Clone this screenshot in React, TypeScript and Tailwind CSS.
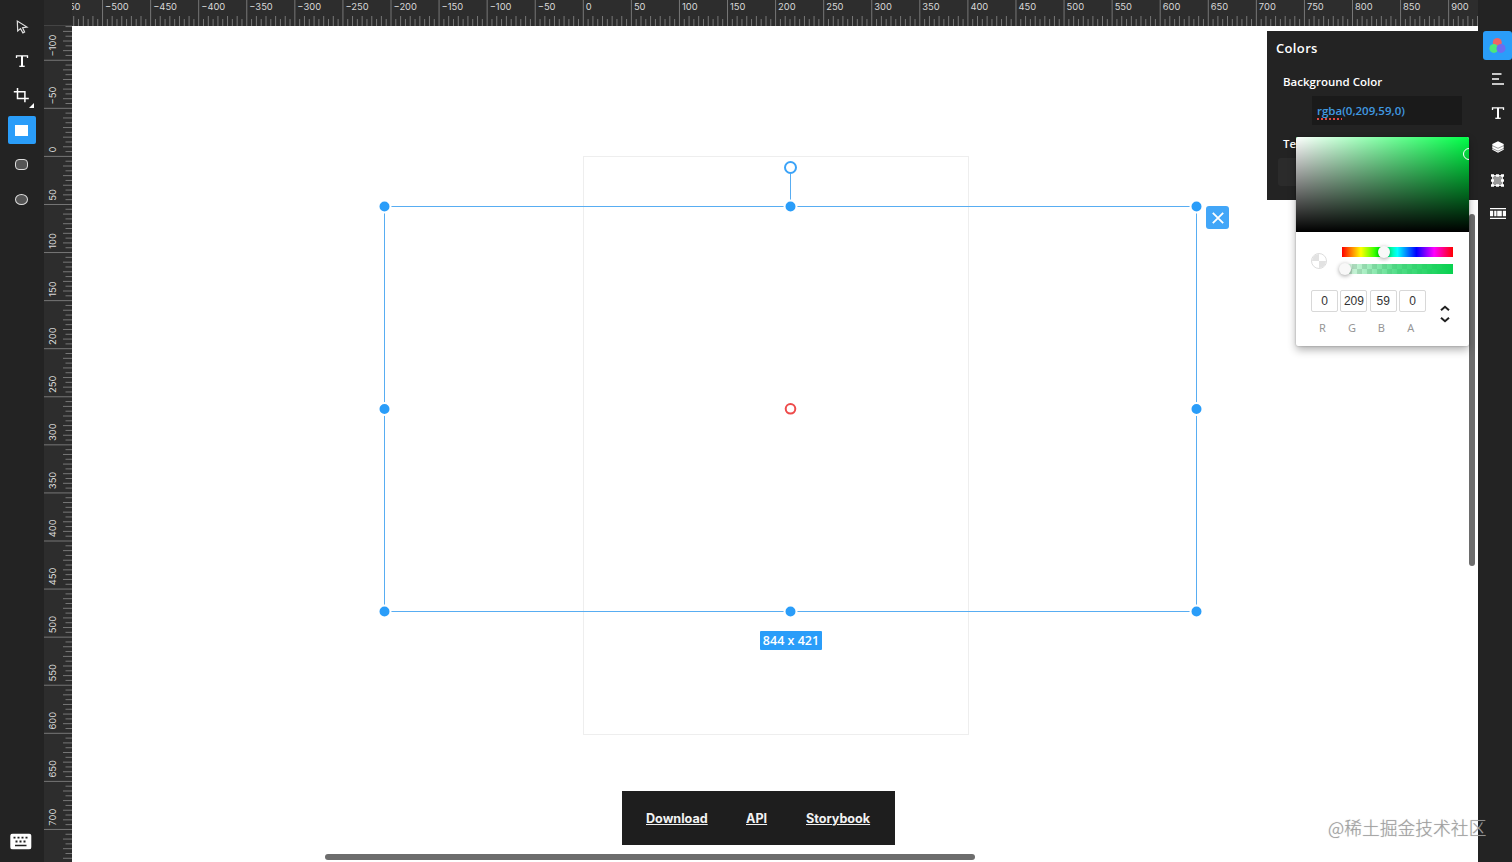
import type { ReactNode } from "react";

const UNIT = 48.075;

const HANDLES = [
  [384.5, 206.5],
  [790.5, 206.5],
  [1196.5, 206.5],
  [384.5, 409],
  [1196.5, 409],
  [384.5, 611.5],
  [790.5, 611.5],
  [1196.5, 611.5],
];

function range(from: number, to: number) {
  return Array.from({ length: to - from + 1 }, (_, i) => from + i);
}

function label(n: number) {
  return n < 0 ? `−${-n}` : `${n}`;
}

function ticks(from: number, to: number, origin: number) {
  return range(from * 10, to * 10).map((i) => ({
    pos: origin + (i * UNIT) / 10,
    kind: i % 10 === 0 ? "main" : i % 2 === 0 ? "long" : "short",
    text: i < to * 10 ? label(i * 5) : "",
  }));
}

function HorizontalRuler() {
  return (
    <svg width="1406" height="26" className="block shrink-0 bg-[#2d2d2d]">
      {ticks(-11, 19, 511.3).map((t) => (
        <g key={t.pos}>
          <line
            x1={t.pos}
            x2={t.pos}
            y1={t.kind === "main" ? 0 : t.kind === "long" ? 16 : 19}
            y2="26"
            stroke="#777"
          />
          {t.kind === "main" && t.text && (
            <text x={t.pos + 2.5} y="9.7" fontSize="9.4" fill="#d8d8d8" fontFamily="Inter, Arial, sans-serif">
              {t.text}
            </text>
          )}
        </g>
      ))}
    </svg>
  );
}

function VerticalRuler() {
  return (
    <svg width="28" height="836" className="block shrink-0 bg-[#2d2d2d]">
      {ticks(-3, 15, 130.4).map((t) => (
        <g key={t.pos}>
          <line
            y1={t.pos}
            y2={t.pos}
            x1={t.kind === "main" ? 0 : t.kind === "long" ? 19 : 21.5}
            x2="28"
            stroke="#777"
          />
          {t.kind === "main" && t.pos > 0 && t.text && (
            <text
              transform={`translate(12.3 ${t.pos - 3.8}) rotate(-90)`}
              fontSize="9.4"
              fill="#d8d8d8"
              fontFamily="Inter, Arial, sans-serif"
            >
              {t.text}
            </text>
          )}
        </g>
      ))}
    </svg>
  );
}

function TextIcon() {
  return (
    <svg width="14" height="14" viewBox="0 0 14 14" fill="none" stroke="#fff">
      <path d="M1.5 4V1.9h11V4" strokeWidth="1.3" />
      <path d="M7 2v10" strokeWidth="2" />
      <path d="M4.3 12.3h5.4" strokeWidth="1.3" />
    </svg>
  );
}

function Tool({ active, children }: { active?: boolean; children: ReactNode }) {
  return (
    <button
      className={
        active
          ? "relative flex h-7 w-7 items-center justify-center rounded-xs bg-[#2a9df9]"
          : "relative flex h-7 w-7 items-center justify-center"
      }
    >
      {children}
    </button>
  );
}

function Toolbar() {
  return (
    <aside className="flex w-11 shrink-0 flex-col items-center justify-between bg-[#232323] pt-[12.5px] pr-px pb-3">
      <div className="flex flex-col gap-[6.6px]">
        <Tool>
          <svg width="14" height="16" viewBox="0 0 14 16" fill="none" stroke="#ddd" strokeWidth="1.2">
            <path d="M2.3 2 2.7 12 5.5 9.6 7.9 13.9 9.6 13 7.6 8.7 12 8.1Z" />
          </svg>
        </Tool>
        <Tool>
          <TextIcon />
        </Tool>
        <Tool>
          <svg width="16" height="16" viewBox="0 0 16 16" fill="none" stroke="#fff" strokeWidth="1.5" className="-translate-x-px -translate-y-px">
            <path d="M0.8 4.7H11.9V15.2M4.5 1V11.4H15.8" />
          </svg>
          <svg width="5" height="5" className="absolute right-[2px] bottom-[2px]">
            <path d="M5 0V5H0Z" fill="#fff" />
          </svg>
        </Tool>
        <Tool active>
          <span className="h-[11px] w-[13px] bg-white" />
        </Tool>
        <Tool>
          <span className="h-[11px] w-[13px] rounded-[4px] border border-[#ddd] bg-[#555]" />
        </Tool>
        <Tool>
          <span className="mt-px h-[11px] w-[13px] rounded-[50%] border border-[#ddd] bg-[#555]" />
        </Tool>
      </div>
      <svg width="22" height="16" viewBox="0 0 22 16" className="-translate-x-px -translate-y-[0.5px]">
        <rect x="0.3" width="21" height="16" rx="2.5" fill="#fff" />
        <path d="M3.5 4.2h15M5.5 8h11" stroke="#222" strokeWidth="1.8" strokeDasharray="2 2" />
        <path d="M5 12h11.5" stroke="#222" strokeWidth="1.7" />
      </svg>
    </aside>
  );
}

function MenuItem({ children }: { children: ReactNode }) {
  return <button className="flex h-[29px] w-[29px] items-center justify-center">{children}</button>;
}

function RightMenu() {
  return (
    <aside className="flex w-[34px] shrink-0 flex-col items-end gap-[4.7px] bg-[#232323] pt-[31px]">
      <button className="flex h-[29px] w-[29px] items-center justify-center rounded-[3px] bg-[#2a9df9]">
        <svg width="17" height="17" viewBox="0 0 17 17">
          <circle cx="8.3" cy="5.4" r="4.5" fill="#ef6464" />
          <circle cx="4.9" cy="11.4" r="4.5" fill="#4de67c" />
          <circle cx="12" cy="11.4" r="4.5" fill="#6d6df0" />
        </svg>
      </button>
      <MenuItem>
        <svg width="12" height="12" stroke="#fff" strokeWidth="1.6">
          <path d="M0 1h9.5M0 6h7M0 11h12" />
        </svg>
      </MenuItem>
      <MenuItem>
        <TextIcon />
      </MenuItem>
      <MenuItem>
        <svg width="12" height="13" viewBox="0 0 12 13" className="translate-y-[0.5px]">
          <path d="M0.3 3.6 6 0.7 11.7 3.6V9.2L6 12.2 0.3 9.2Z" fill="#fff" />
          <path d="M0 5 6 7.8 12 5M0 7.8 6 10.6 12 7.8" fill="none" stroke="#555" strokeWidth="0.6" />
        </svg>
      </MenuItem>
      <MenuItem>
        <svg width="13" height="13" viewBox="0 0 13 13">
          <rect x="1.5" y="1.5" width="10" height="10" fill="#999" stroke="#ddd" />
          <path d="M0 1.5h3M5 1.5h3M10 1.5h3M0 6.5h3M10 6.5h3M0 11.5h3M5 11.5h3M10 11.5h3" stroke="#fff" strokeWidth="2.4" />
        </svg>
      </MenuItem>
      <MenuItem>
        <svg width="16" height="11" viewBox="0 0 16 11">
          <path d="M0 0.7h16M0 10.3h16" stroke="#fff" strokeWidth="1.2" />
          <path d="M0 2.8h3.2v5.4H0ZM4.2 2.8h2.3v5.4H4.2ZM7.2 2.8h4.6v5.4H7.2ZM12.8 2.8H16v5.4H12.8Z" fill="#fff" />
        </svg>
      </MenuItem>
    </aside>
  );
}

function ColorPicker() {
  return (
    <div className="absolute top-[111px] left-[1224px] h-[209px] w-[173px] overflow-hidden rounded-xs bg-white shadow-[0_0_2px_rgba(0,0,0,0.3),0_4px_8px_rgba(0,0,0,0.3)]">
      <div className="relative h-[95px] bg-[#00ff48]">
        <div className="absolute inset-0 bg-[linear-gradient(to_right,#fff,rgba(255,255,255,0))]" />
        <div className="absolute inset-0 bg-[linear-gradient(to_top,#000,rgba(0,0,0,0))]" />
        <span className="absolute top-[11px] left-[167px] h-3 w-3 rounded-full border-[1.5px] border-white" />
      </div>
      <div className="flex items-center pt-[15px] pl-[15px]">
        <svg width="16" height="16" viewBox="0 0 16 16">
          <circle cx="8" cy="8" r="7.5" fill="#fff" stroke="#ddd" />
          <path d="M8 8V1A7 7 0 0 0 1 8ZM8 8V15A7 7 0 0 0 15 8Z" fill="#e2e2e2" />
        </svg>
        <div className="ml-[15px] flex w-[111px] flex-col gap-[7px]">
          <div className="relative h-[10px] bg-[linear-gradient(to_right,#f00_0%,#ff0_17%,#0f0_33%,#0ff_50%,#00f_67%,#f0f_83%,#f00_100%)]">
            <span className="absolute -top-px left-[36px] h-3 w-3 rounded-full bg-[#f8f8f8] shadow-[0_1px_4px_rgba(0,0,0,0.37)]" />
          </div>
          <div className="relative h-[10px] bg-[conic-gradient(#fff_25%,#ddd_0_50%,#fff_0_75%,#ddd_0)] bg-size-[10px_10px]">
            <div className="absolute inset-0 bg-linear-to-r from-[#00d13b]/10 via-[#16d25f]/75 via-50% to-[#08d14f]" />
            <span className="absolute -top-px -left-[3px] h-3 w-3 rounded-full bg-[#f8f8f8] shadow-[0_1px_4px_rgba(0,0,0,0.37)]" />
          </div>
        </div>
      </div>
      <div className="flex pt-[15.5px] pl-[15px]">
        <div className="flex gap-[2.4px]">
          {[
            ["R", "0"],
            ["G", "209"],
            ["B", "59"],
            ["A", "0"],
          ].map(([name, value]) => (
            <div key={name} className="w-[27px] text-center">
              <div className="h-[22px] rounded-xs border border-[#d8d8d8] font-['Liberation_Sans',Arial,sans-serif] text-[12px] leading-[21px] text-[#333]">
                {value}
              </div>
              <div className="mt-[9px] -ml-1 font-['Noto_Sans',sans-serif] text-[11px] leading-[13px] text-[#969696]">{name}</div>
            </div>
          ))}
        </div>
        <svg width="10" height="18" viewBox="0 0 10 18" fill="none" stroke="#222" strokeWidth="2" className="mt-[15px] ml-[14px]">
          <path d="M1 5.3 5 1.8 9 5.3M1 12.7 5 16.2 9 12.7" />
        </svg>
      </div>
    </div>
  );
}

function ColorsPanel() {
  return (
    <section className="absolute top-[5px] right-0 h-[169px] w-[211px] bg-[#232323] font-['Open_Sans',sans-serif] font-semibold text-white">
      <h2 className="pt-[7px] pl-[9px] text-[13px] leading-5 tracking-[0.35px]">Colors</h2>
      <div className="pt-4 pl-4">
        <h3 className="text-[11.5px] leading-4">Background Color</h3>
        <div className="mt-[6px] ml-[29px] flex h-[29px] w-[150px] items-center bg-[#1a1a1a] pt-px pl-[5px] text-[11.5px] font-semibold text-[#4099e0]">
          <span className="underline decoration-[#e04545] decoration-dotted decoration-2 underline-offset-[3px]">rgba</span>
          (0,209,59,0)
        </div>
        <h3 className="mt-[11px] text-[11.5px] leading-4">Text Color</h3>
        <div className="mt-[6px] -ml-[5px] h-7 w-7 rounded-[3px] bg-[#2b2b2b]" />
      </div>
    </section>
  );
}

/* Canvas children are placed in page coordinates, so shift by the rulers' size. */
function Selection() {
  return (
    <div className="absolute -top-[26px] -left-[72px]">
      <div className="absolute top-[206px] left-[384px] h-[406px] w-[813px] border border-[#58adf2]" />
      <div className="absolute top-[174px] left-[790px] h-8 w-px bg-[#58adf2]" />
      <div className="absolute top-[161px] left-[784px] h-[13px] w-[13px] rounded-full border-2 border-[#3ba3f8] bg-white" />
      <svg width="1512" height="862" className="absolute top-0 left-0" fill="#2a9df9" stroke="#fff" strokeWidth="2">
        {HANDLES.map(([x, y]) => (
          <circle key={`${x}-${y}`} cx={x} cy={y} r="6" />
        ))}
        <circle cx="790.5" cy="408.8" r="4.8" fill="#fff" stroke="#ee4b4b" />
      </svg>
      <div className="absolute top-[631px] left-[760px] flex h-[19px] w-[62px] items-center justify-center rounded-[1px] bg-[#2a9df9] pt-[2px] font-['Open_Sans',sans-serif] text-[12.5px] font-semibold whitespace-nowrap text-white">
        844 x 421
      </div>
      <button className="absolute top-[206px] left-[1206px] flex h-[23px] w-[23px] items-center justify-center rounded-[3px] bg-[#42a6f8]">
        <svg width="12" height="12" stroke="#fff" strokeWidth="1.8">
          <path d="M0.8 0.8 11.2 11.2M11.2 0.8 0.8 11.2" />
        </svg>
      </button>
    </div>
  );
}

function Links() {
  return (
    <nav className="absolute top-[765px] left-[550px] flex h-[54px] w-[273px] items-center bg-[#1e1e1e] pt-[2px] pl-6 font-[Inter,sans-serif] text-[12.6px] font-bold text-[#f2f2f2]">
      <a href="#download" className="w-[100px] underline">
        Download
      </a>
      <a href="#api" className="w-[60px] underline">
        API
      </a>
      <a href="#storybook" className="underline">
        Storybook
      </a>
    </nav>
  );
}

export default function App() {
  return (
    <div className="relative flex h-[862px] w-[1512px] overflow-hidden bg-white">
      <Toolbar />
      <div className="flex flex-1 flex-col">
        <div className="flex">
          <div className="h-[26px] w-7 shrink-0 border-b border-[#444] bg-[#292929]" />
          <HorizontalRuler />
        </div>
        <div className="flex">
          <VerticalRuler />
          <main className="relative h-[836px] w-[1406px]">
            <div className="absolute top-[130px] left-[511px] h-[579px] w-[386px] border border-[#eee]" />
            <Selection />
            <Links />
            <ColorsPanel />
            <div className="absolute top-[188px] left-[1397px] h-[352px] w-[6px] rounded-full bg-[#6d6d6d]" />
            <ColorPicker />
            <div className="absolute top-[828px] left-[253px] h-[6px] w-[650px] rounded-full bg-[#6d6d6d]" />
          </main>
        </div>
      </div>
      <RightMenu />
      <div className="absolute top-[814px] left-[1328px] font-['Noto_Sans_CJK_SC',sans-serif] text-[17.8px] leading-[26px] font-light whitespace-nowrap text-[#a0a0a0] [text-shadow:0_0_1px_#8888]">
        @稀土掘金技术社区
      </div>
    </div>
  );
}
